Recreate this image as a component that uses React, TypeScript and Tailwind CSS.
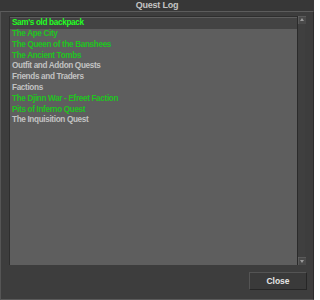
const quests = [
  { name: "Sam's old backpack", done: true, selected: true },
  { name: "The Ape City", done: true },
  { name: "The Queen of the Banshees", done: true },
  { name: "The Ancient Tombs", done: true },
  { name: "Outfit and Addon Quests", done: false },
  { name: "Friends and Traders", done: false },
  { name: "Factions", done: false },
  { name: "The Djinn War - Efreet Faction", done: true },
  { name: "Pits of Inferno Quest", done: true },
  { name: "The Inquisition Quest", done: false },
];

function ScrollArrow({ down }: { down?: boolean }) {
  return (
    <svg width="8" height="8" viewBox="0 0 8 8" className="block">
      <rect x="0" y="0" width="8" height="8" fill="#4a4a4a" />
      <path d="M0 0H8M0 0V8" stroke="#6a6a6a" strokeWidth="1" />
      <path
        d={down ? "M2 3L4 6L6 3Z" : "M2 5L4 2L6 5Z"}
        fill="#9a9a9a"
      />
    </svg>
  );
}

export default function App() {
  return (
    <div
      className="flex h-[300px] w-[314px] flex-col bg-[#3d3d3d] text-[9px]"
      style={{ fontFamily: '"Liberation Sans", Arial, sans-serif' }}
    >
      {/* title bar */}
      <div className="flex h-[11px] items-center justify-center bg-[#373737] font-bold tracking-[-0.2px] text-[#c4c4c4] leading-none">
        Quest Log
      </div>
      <div className="flex flex-1 flex-col border-t border-l border-r border-b border-t-[#5c5c5c] border-l-[#555555] border-r-[#2c2c2c] border-b-[#5a5a5a]">
        <div className="ml-[8px] mr-[8px] mt-[4px] flex h-[249px]">
          <div className="flex-1 border-t border-l border-t-[#2e2e2e] border-l-[#2e2e2e] bg-[#5e5e5e] pt-[1px]">
            {quests.map((q) => (
              <div
                key={q.name}
                className={`flex h-[10.8px] items-center pl-[2px] text-[8.2px] font-bold tracking-[-0.35px] leading-none ${
                  q.selected ? "bg-[#434343] text-[#22ff22]" : ""
                } ${!q.selected && q.done ? "text-[#1fc41f]" : ""} ${
                  !q.done ? "text-[#c2c2c2]" : ""
                }`}
              >
                {q.name}
              </div>
            ))}
          </div>
          <div className="flex w-[8px] flex-col justify-between bg-[#3f3f3f] border-l border-[#2a2a2a]">
            <ScrollArrow />
            <ScrollArrow down />
          </div>
        </div>
        <div className="mr-[6px] mt-[7px] flex justify-end">
          <button className="flex h-[18px] w-[58px] items-center justify-center border border-t-[#545454] border-l-[#545454] border-r-[#262626] border-b-[#262626] bg-[#3a3a3a] text-[8.5px] font-bold text-[#e6e6e6]">
            Close
          </button>
        </div>
      </div>
    </div>
  );
}
